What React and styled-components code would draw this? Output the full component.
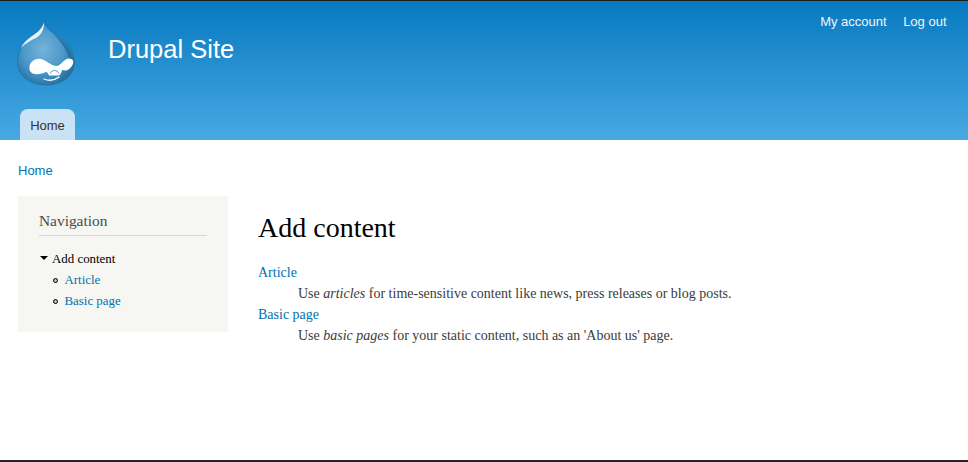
import React from 'react';
import styled, { createGlobalStyle } from 'styled-components';

const GlobalStyle = createGlobalStyle`
    html, body {
        margin: 0;
        padding: 0;
        background: #fff;
    }
`;

const Page = styled.div`
    width: 968px;
    height: 462px;
    box-sizing: border-box;
    border-top: 1px solid #1c1c1c;
    border-bottom: 2px solid #242424;
    display: flex;
    flex-direction: column;
    overflow: hidden;
    font-family: "Liberation Serif", serif;
`;
const Header = styled.header`
    height: 139px;
    flex: none;
    box-sizing: border-box;
    background: linear-gradient(to bottom, #0779bf, #48a9e4);
    font-family: "Liberation Sans", sans-serif;
    padding: 0 21px 0 17px;
    display: flex;
    flex-direction: column;
`;
const TopRow = styled.div`
    display: flex;
    align-items: flex-start;
    height: 108px;
    flex: none;
`;
const Logo = styled.svg`
    width: 58px;
    height: 66px;
    margin-top: 19px;
    flex: none;
`;
const SiteName = styled.div`
    margin: 33px 0 0 33px;
    font-size: 25.5px;
    line-height: 30px;
    color: #fff;
    flex: 1;
`;
const SecondaryMenu = styled.nav`
    display: flex;
    gap: 16.5px;
    margin: 13px 0.5px 0 0;
`;
const SecondaryLink = styled.a`
    font-size: 13px;
    line-height: 15px;
    color: #eef6fc;
`;
const Tab = styled.div`
    width: 55px;
    height: 31px;
    margin-left: 3px;
    box-sizing: border-box;
    background: #c9e2f5;
    border-radius: 8px 8px 0 0;
    color: #333;
    font-size: 13px;
    line-height: 33px;
    text-align: center;
`;
const Breadcrumb = styled.a`
    display: block;
    margin: 23px 0 0 18px;
    height: 15px;
    font-family: "Liberation Sans", sans-serif;
    font-size: 13px;
    line-height: 15px;
    color: #0071b3;
`;
const Columns = styled.div`
    display: flex;
    align-items: flex-start;
    gap: 30px;
    margin: 18px 0 0 18px;
`;
const Sidebar = styled.aside`
    width: 210px;
    height: 136px;
    box-sizing: border-box;
    background: #f6f6f2;
    padding: 16px 21px 0;
`;
const BlockTitle = styled.h2`
    margin: 0;
    font-weight: normal;
    font-size: 15.4px;
    line-height: 18px;
    color: #4a4a4a;
    padding-bottom: 5px;
    border-bottom: 1px solid #d6d6d6;
`;
const Tree = styled.ul`
    list-style: none;
    margin: 13px 0 0;
    padding: 0;
`;
const TreeItem = styled.li`
    display: flex;
    align-items: center;
    height: 21px;
    font-size: 12.9px;
    color: ${p => (p.$open ? '#000' : '#0071b3')};
    padding-left: ${p => (p.$open ? '0' : '14px')};
`;
const Arrow = styled.span`
    width: 0;
    height: 0;
    margin: -3px 4px 0 1px;
    border-left: 4px solid transparent;
    border-right: 4px solid transparent;
    border-top: 4.5px solid #000;
`;
const Bullet = styled.span`
    width: 3px;
    height: 3px;
    margin-right: 6.5px;
    border: 1px solid #000;
    border-radius: 50%;
    background: #bbb;
`;
const Main = styled.main`
    flex: 1;
`;
const Title = styled.h1`
    margin: 16px 0 0;
    font-weight: normal;
    font-size: 28px;
    line-height: 32px;
    color: #000;
`;
const List = styled.dl`
    margin: 18px 0 0;
    font-size: 14px;
    line-height: 21px;
    color: #3b3b3b;
`;
const Term = styled.dt`
    color: #0071b3;
`;
const Description = styled.dd`
    margin: 0 0 0 40px;
`;

const DrupalLogo = () => (
    <Logo viewBox="0 0 58 66">
        <defs>
            <radialGradient id="drop" cx="45%" cy="45%" r="60%">
                <stop offset="0" stopColor="#74b4da" />
                <stop offset="0.6" stopColor="#4a98c9" />
                <stop offset="1" stopColor="#23709f" />
            </radialGradient>
        </defs>
        <path
            d="M26.500 1 C28 7 33 11 39 15 C49 21 57.500 29 57.500 42 C57.500 55 46 65 29 65 C12 65 0.500 55 0.500 42 C0.500 29 9 22 17 15 C22 11 26 7 26.500 1 Z"
            fill="url(#drop)"
            stroke="#2c6f9c"
            strokeWidth="0.7"
        />
        <path d="M26.500 2 C26 8 21 12 15 16 C10 19.500 6 23 4 28 C9 23 14 20 19 18 C24 15 28 9 26.500 2 Z" fill="#e8f2f9" />
        <path d="M36 14 C48 20 56 30 56 42 C56 45 55 48 54 50 C53 36 47 24 36 14 Z" fill="#1f6c9f" opacity="0.75" />
        <path
            d="M12.500 47 C13 41 19 38 24 39 C29 40 33 45 39 46 C43 46.500 47 39 51 38.500 C55.500 38 57.500 41 55.500 45 C53.500 49.500 49 51.500 45 50 C44.500 52 44 54.500 42 55.500 L32 55.500 C31 53.500 30.500 52 29 52 C26 53 22 55 18 54 C14 53.500 12 51 12.500 47 Z"
            fill="#fff"
        />
        <path d="M33 53.500 C35 49.500 40 49.500 42 53.500" fill="none" stroke="#4a98c9" strokeWidth="1" />
        <path d="M27 59 C32 61 38 60 42 57" fill="none" stroke="#fff" strokeWidth="1.3" strokeLinecap="round" />
    </Logo>
);

const App = () => {
    return (
        <Page>
            <GlobalStyle />
            <Header>
                <TopRow>
                    <DrupalLogo />
                    <SiteName>Drupal Site</SiteName>
                    <SecondaryMenu>
                        <SecondaryLink>My account</SecondaryLink>
                        <SecondaryLink>Log out</SecondaryLink>
                    </SecondaryMenu>
                </TopRow>
                <Tab>Home</Tab>
            </Header>
            <Breadcrumb>Home</Breadcrumb>
            <Columns>
                <Sidebar>
                    <BlockTitle>Navigation</BlockTitle>
                    <Tree>
                        <TreeItem $open><Arrow />Add content</TreeItem>
                        <TreeItem><Bullet />Article</TreeItem>
                        <TreeItem><Bullet />Basic page</TreeItem>
                    </Tree>
                </Sidebar>
                <Main>
                    <Title>Add content</Title>
                    <List>
                        <Term>Article</Term>
                        <Description>Use <em>articles</em> for time-sensitive content like news, press releases or blog posts.</Description>
                        <Term>Basic page</Term>
                        <Description>Use <em>basic pages</em> for your static content, such as an 'About us' page.</Description>
                    </List>
                </Main>
            </Columns>
        </Page>
    );
};

export default App;
